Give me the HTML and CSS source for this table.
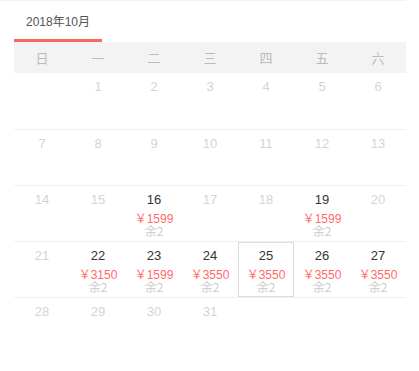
FILE: index.html
```html
<!DOCTYPE html>
<html lang="zh">
<head>
<meta charset="utf-8">
<link rel="stylesheet" href="styles.css">
</head>
<body>
<div class="page">
  <div class="tabs">
    <div class="tab active">2018年10月</div>
  </div>
  <div class="cal">
    <div class="week">
      <span>日</span><span>一</span><span>二</span><span>三</span><span>四</span><span>五</span><span>六</span>
    </div>
    <div class="row">
      <div class="cell"></div>
      <div class="cell off"><div class="num">1</div></div>
      <div class="cell off"><div class="num">2</div></div>
      <div class="cell off"><div class="num">3</div></div>
      <div class="cell off"><div class="num">4</div></div>
      <div class="cell off"><div class="num">5</div></div>
      <div class="cell off"><div class="num">6</div></div>
    </div>
    <div class="row">
      <div class="cell off"><div class="num">7</div></div>
      <div class="cell off"><div class="num">8</div></div>
      <div class="cell off"><div class="num">9</div></div>
      <div class="cell off"><div class="num">10</div></div>
      <div class="cell off"><div class="num">11</div></div>
      <div class="cell off"><div class="num">12</div></div>
      <div class="cell off"><div class="num">13</div></div>
    </div>
    <div class="row">
      <div class="cell off"><div class="num">14</div></div>
      <div class="cell off"><div class="num">15</div></div>
      <div class="cell"><div class="num">16</div><div class="price">￥1599</div><div class="stock">余2</div></div>
      <div class="cell off"><div class="num">17</div></div>
      <div class="cell off"><div class="num">18</div></div>
      <div class="cell"><div class="num">19</div><div class="price">￥1599</div><div class="stock">余2</div></div>
      <div class="cell off"><div class="num">20</div></div>
    </div>
    <div class="row">
      <div class="cell off"><div class="num">21</div></div>
      <div class="cell"><div class="num">22</div><div class="price">￥3150</div><div class="stock">余2</div></div>
      <div class="cell"><div class="num">23</div><div class="price">￥1599</div><div class="stock">余2</div></div>
      <div class="cell"><div class="num">24</div><div class="price">￥3550</div><div class="stock">余2</div></div>
      <div class="cell selected"><div class="num">25</div><div class="price">￥3550</div><div class="stock">余2</div></div>
      <div class="cell"><div class="num">26</div><div class="price">￥3550</div><div class="stock">余2</div></div>
      <div class="cell"><div class="num">27</div><div class="price">￥3550</div><div class="stock">余2</div></div>
    </div>
    <div class="row">
      <div class="cell off"><div class="num">28</div></div>
      <div class="cell off"><div class="num">29</div></div>
      <div class="cell off"><div class="num">30</div></div>
      <div class="cell off"><div class="num">31</div></div>
      <div class="cell"></div>
      <div class="cell"></div>
      <div class="cell"></div>
    </div>
  </div>
</div>
</body>
</html>
```
FILE: styles.css
```css
html, body {
  margin: 0;
  padding: 0;
  background: #fff;
}
body {
  font-family: "Liberation Sans", Arial, "Noto Sans CJK SC", sans-serif;
  color: #333;
}
.page {
  border-top: 1px solid #f2f2f2;
  padding-left: 14px;
  width: 392px;
}
.tabs {
  display: flex;
}
.tab {
  width: 88px;
  height: 38px;
  line-height: 42px;
  text-align: center;
  font-size: 12px;
  color: #555;
  border-bottom: 3px solid #f5685f;
}
.cal {
  width: 392px;
}
.week {
  display: grid;
  grid-template-columns: repeat(7, 56px);
  height: 31px;
  line-height: 31px;
  background: #f3f3f3;
  font-family: "Noto Sans CJK SC", sans-serif;
  font-size: 13px;
  color: #bbb;
  text-align: center;
}
.row {
  display: grid;
  grid-template-columns: repeat(7, 56px);
  height: 56px;
}
.row + .row {
  height: 55px;
  border-top: 1px solid #f0f0f0;
}
.cell {
  box-sizing: border-box;
  text-align: center;
  padding-top: 6px;
  height: 100%;
}
.cell.selected {
  border: 1px solid #dcdcdc;
  padding-top: 5px;
}
.num {
  font-size: 13px;
  line-height: 16px;
  color: #333;
}
.off .num {
  color: #d4d4d4;
}
.price {
  margin-top: 5px;
  font-size: 12px;
  line-height: 12px;
  color: #ff6b6b;
}
.stock {
  font-family: "Noto Sans CJK SC", sans-serif;
  font-size: 12px;
  line-height: 11px;
  color: #cccccc;
}
```
